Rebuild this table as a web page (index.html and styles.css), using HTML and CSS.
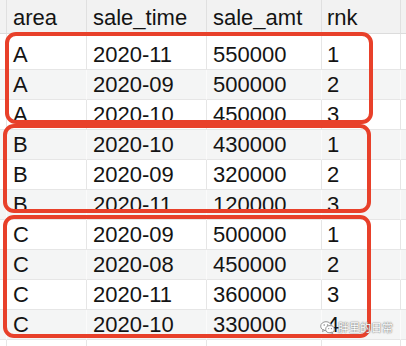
FILE: index.html
```html
<!DOCTYPE html>
<html>
<head>
<meta charset="utf-8">
<link rel="stylesheet" href="styles.css">
</head>
<body>
<div class="wrap">
  <div class="grid">
    <div class="c hd"></div><div class="c hd">area</div><div class="c hd">sale_time</div><div class="c hd">sale_amt</div><div class="c hd rk">rnk</div><div class="c hd"></div>

    <div class="c"></div><div class="c">A</div><div class="c">2020-11</div><div class="c">550000</div><div class="c rk">1</div><div class="c"></div>
    <div class="c g"></div><div class="c g">A</div><div class="c g">2020-09</div><div class="c g">500000</div><div class="c g rk">2</div><div class="c g"></div>
    <div class="c"></div><div class="c">A</div><div class="c">2020-10</div><div class="c">450000</div><div class="c rk">3</div><div class="c"></div>

    <div class="c g"></div><div class="c g">B</div><div class="c g">2020-10</div><div class="c g">430000</div><div class="c g rk">1</div><div class="c g"></div>
    <div class="c"></div><div class="c">B</div><div class="c">2020-09</div><div class="c">320000</div><div class="c rk">2</div><div class="c"></div>
    <div class="c g"></div><div class="c g">B</div><div class="c g">2020-11</div><div class="c g">120000</div><div class="c g rk">3</div><div class="c g"></div>

    <div class="c"></div><div class="c">C</div><div class="c">2020-09</div><div class="c">500000</div><div class="c rk">1</div><div class="c"></div>
    <div class="c g"></div><div class="c g">C</div><div class="c g">2020-08</div><div class="c g">450000</div><div class="c g rk">2</div><div class="c g"></div>
    <div class="c"></div><div class="c">C</div><div class="c">2020-11</div><div class="c">360000</div><div class="c rk">3</div><div class="c"></div>
    <div class="c g"></div><div class="c g">C</div><div class="c g">2020-10</div><div class="c g">330000</div><div class="c g rk">4</div><div class="c g"></div>

    <div class="c"></div><div class="c"></div><div class="c"></div><div class="c"></div><div class="c"></div><div class="c"></div>
  </div>

  <div class="box box1"></div>
  <div class="box box2"></div>
  <div class="box box3"></div>

  <div class="mark">
    <svg class="wx" width="15" height="13" viewBox="0 0 15 13">
      <ellipse cx="6" cy="5.2" rx="5.3" ry="4.5" fill="#fff" stroke="#8a8a8a" stroke-width="0.9"/>
      <path d="M3 8.6 L2.4 10.6 L4.8 9.4 Z" fill="#fff" stroke="#8a8a8a" stroke-width="0.8"/>
      <ellipse cx="10" cy="8.2" rx="4.3" ry="3.6" fill="#fff" stroke="#8a8a8a" stroke-width="0.9"/>
      <path d="M12 11 L12.8 12.6 L10.6 11.6 Z" fill="#fff" stroke="#8a8a8a" stroke-width="0.8"/>
      <circle cx="4.2" cy="4" r="0.8" fill="#8a8a8a"/>
      <circle cx="7.6" cy="4" r="0.8" fill="#8a8a8a"/>
      <circle cx="8.7" cy="7.6" r="0.6" fill="#8a8a8a"/>
      <circle cx="11.4" cy="7.6" r="0.6" fill="#8a8a8a"/>
    </svg>
    <span class="mt">胖里的日常</span>
  </div>
</div>
</body>
</html>
```

FILE: styles.css
```css
html, body {
  margin: 0;
  padding: 0;
  background: #fff;
}

.wrap {
  position: relative;
  width: 406px;
  height: 346px;
  overflow: hidden;
}

.grid {
  display: grid;
  grid-template-columns: 7px 80px 120px 115px 79px 1fr;
  grid-template-rows: 34px 36px repeat(10, 30px) 30px;
  font-family: "Liberation Sans", Arial, sans-serif;
  font-size: 22px;
  color: #141414;
}

.c {
  box-sizing: border-box;
  background: #fff;
  border-right: 1px solid #e6e6e6;
  border-bottom: 1px solid #e6e6e6;
  display: flex;
  align-items: flex-end;
  padding: 0 0 2px 6px;
  line-height: 25px;
  white-space: nowrap;
  overflow: hidden;
}

.c.g {
  background: #f4f5f5;
  border-right-color: #fbfbfb;
}

.c.hd {
  background: #f2f2f2;
  border-right-color: #e0e0e0;
  border-bottom-color: #dcdcdc;
  padding-bottom: 3px;
}

.c.rk {
  padding-left: 5px;
}

.box {
  position: absolute;
  box-sizing: border-box;
  border: 4px solid #e8402a;
  border-radius: 11px;
}

.box1 { left: 5px; top: 32px; width: 368px; height: 92px; }
.box2 { left: 3px; top: 124px; width: 368px; height: 89px; }
.box3 { left: 3px; top: 215px; width: 368px; height: 123px; }

.mark {
  position: absolute;
  left: 320px;
  top: 320px;
  display: flex;
  align-items: center;
  gap: 3px;
}

.mt {
  font-family: "Noto Sans CJK SC", sans-serif;
  font-size: 11px;
  line-height: 14px;
  color: #fff;
  text-shadow: 0 0 1px #666, 0 0 2px #888;
}
```
